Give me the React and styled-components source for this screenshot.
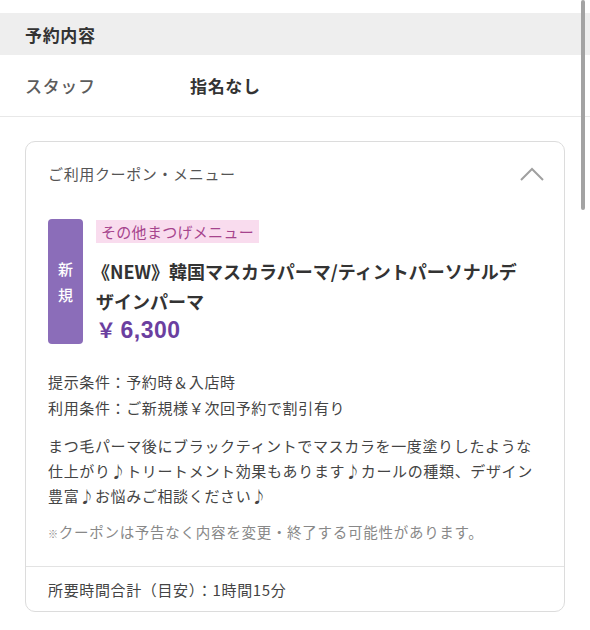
import React from 'react';
import styled, { createGlobalStyle } from 'styled-components';

const GlobalStyle = createGlobalStyle`
  body {
    margin: 0;
    background: #fff;
    font-family: "Noto Sans CJK JP", "Noto Sans", sans-serif;
    color: #333;
  }
`;

const Page = styled.div`
  position: relative;
  width: 590px;
  height: 630px;
  padding-top: 13px;
  box-sizing: border-box;
  overflow: hidden;
  letter-spacing: 0.04em;
`;

const ScrollThumb = styled.div`
  position: absolute;
  top: 0;
  right: 5px;
  width: 4px;
  height: 210px;
  border-radius: 2px;
  background: #a3a3a3;
`;

const SectionHead = styled.div`
  height: 42px;
  display: flex;
  align-items: center;
  padding-left: 25px;
  background: #eeeeee;
  font-size: 17px;
  font-weight: 700;
  color: #333;
`;

const InfoRow = styled.div`
  height: 61px;
  display: flex;
  align-items: center;
  padding-left: 25px;
  border-bottom: 1px solid #e8e8e8;
  font-size: 17px;
`;

const InfoLabel = styled.span`
  width: 165px;
  color: #5c5c5c;
  font-weight: 500;
`;

const InfoValue = styled.span`
  font-weight: 700;
  color: #333;
`;

const Card = styled.div`
  margin: 24px 25px 0;
  border: 1px solid #dcdcdc;
  border-radius: 10px;
  overflow: hidden;
`;

const CardHeader = styled.div`
  height: 63px;
  display: flex;
  align-items: center;
  justify-content: space-between;
  padding: 0 19px 0 22px;
  font-size: 15px;
  color: #555;
`;

const CardBody = styled.div`
  padding: 14px 30px 21px 22px;
  border-bottom: 1px solid #e3e3e3;
`;

const Coupon = styled.div`
  display: flex;
  gap: 13px;
`;

const NewBadge = styled.div`
  flex: 0 0 35px;
  display: flex;
  align-items: center;
  justify-content: center;
  border-radius: 4px;
  background: #8b6db9;
  color: #fff;
  font-size: 15px;
  font-weight: 500;
  line-height: 26px;
  text-align: center;
  letter-spacing: 0;
`;

const CouponMain = styled.div`
  flex: 1;
  min-width: 0;
`;

const CategoryTag = styled.span`
  display: inline-block;
  height: 23px;
  line-height: 23px;
  padding: 0 5px;
  background: #f9dcee;
  color: #a6448d;
  font-size: 15px;
  letter-spacing: 0.02em;
`;

const CouponTitle = styled.div`
  margin-top: 13px;
  font-size: 18px;
  font-weight: 700;
  line-height: 30px;
  color: #333;
  letter-spacing: 0;
  text-indent: -4px;
`;

const Price = styled.div`
  display: flex;
  align-items: baseline;
  gap: 4px;
  font-size: 23px;
  font-weight: 600;
  line-height: 28px;
  color: #6b3fa0;
  letter-spacing: 0.5px;
`;

const Yen = styled.span`
  font-family: "Noto Sans CJK JP", sans-serif;
  font-size: 20px;
`;

const Amount = styled.span`
  font-family: "Liberation Sans", "Noto Sans", sans-serif;
`;

const Conditions = styled.div`
  margin-top: 25px;
  font-size: 15px;
  line-height: 26px;
  color: #444;
`;

const Description = styled.p`
  margin: 12px 0 0;
  font-size: 15px;
  line-height: 25px;
  color: #444;
`;

const Note = styled.p`
  margin: 13px 0 0;
  font-size: 14.5px;
  line-height: 22px;
  color: #888;
  letter-spacing: 0.05em;
`;

const Mark = styled.span`
  font-size: 10px;
`;

const CardFooter = styled.div`
  height: 44px;
  display: flex;
  align-items: center;
  padding-left: 22px;
  font-size: 15px;
  color: #444;
`;

const Chevron = () => (
  <svg width="26" height="16" viewBox="0 0 26 16">
    <polyline points="2,14 13,3 24,14" fill="none" stroke="#a0a0a0" strokeWidth="2" />
  </svg>
);

export default function App() {
  return (
    <>
      <GlobalStyle />
      <Page>
        <ScrollThumb />
        <SectionHead>予約内容</SectionHead>
        <InfoRow>
          <InfoLabel>スタッフ</InfoLabel>
          <InfoValue>指名なし</InfoValue>
        </InfoRow>
        <Card>
          <CardHeader>
            <span>ご利用クーポン・メニュー</span>
            <Chevron />
          </CardHeader>
          <CardBody>
            <Coupon>
              <NewBadge>新<br />規</NewBadge>
              <CouponMain>
                <CategoryTag>その他まつげメニュー</CategoryTag>
                <CouponTitle>《NEW》韓国マスカラパーマ/ティントパーソナルデザインパーマ</CouponTitle>
                <Price>
                  <Yen>￥</Yen>
                  <Amount>6,300</Amount>
                </Price>
              </CouponMain>
            </Coupon>
            <Conditions>
              <div>提示条件：予約時＆入店時</div>
              <div>利用条件：ご新規様￥次回予約で割引有り</div>
            </Conditions>
            <Description>
              まつ毛パーマ後にブラックティントでマスカラを一度塗りしたような仕上がり♪トリートメント効果もあります♪カールの種類、デザイン豊富♪お悩みご相談ください♪
            </Description>
            <Note><Mark>※</Mark>クーポンは予告なく内容を変更・終了する可能性があります。</Note>
          </CardBody>
          <CardFooter>所要時間合計（目安）：1時間15分</CardFooter>
        </Card>
      </Page>
    </>
  );
}
